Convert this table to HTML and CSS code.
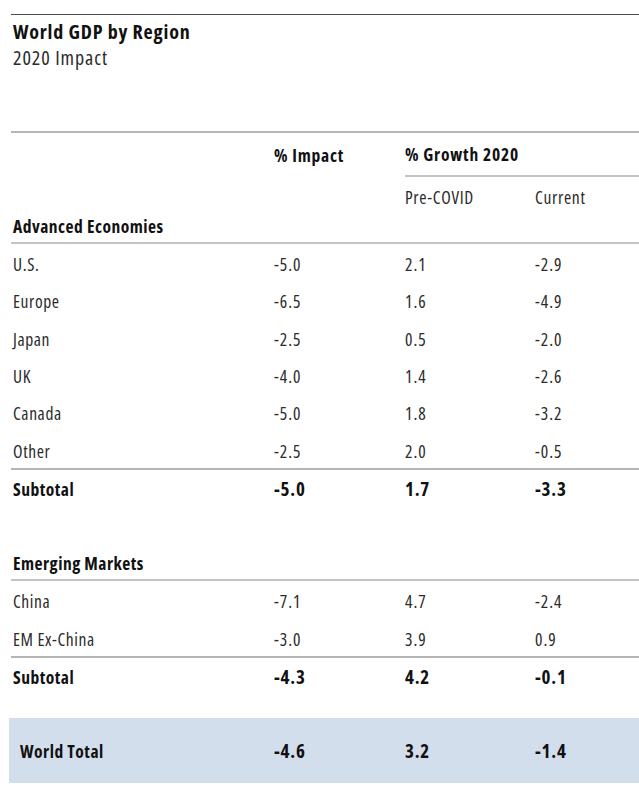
FILE: index.html
```html
<!DOCTYPE html>
<html lang="en">
<head>
<meta charset="utf-8">
<title>World GDP by Region</title>
<link rel="stylesheet" href="styles.css">
</head>
<body>
<div class="figure">
  <header class="fig-head">
    <h1 class="title">World GDP by Region</h1>
    <p class="subtitle">2020 Impact</p>
  </header>
  <div class="table">
    <div class="row head">
      <span></span>
      <span class="hcell">% Impact</span>
      <span class="hcell growth">% Growth 2020</span>
    </div>
    <div class="row subhead">
      <span></span>
      <span></span>
      <span>Pre-COVID</span>
      <span>Current</span>
    </div>
    <div class="group">Advanced Economies</div>
    <div class="row data"><span class="lbl">U.S.</span><span>-5.0</span><span>2.1</span><span>-2.9</span></div>
    <div class="row data"><span class="lbl">Europe</span><span>-6.5</span><span>1.6</span><span>-4.9</span></div>
    <div class="row data"><span class="lbl">Japan</span><span>-2.5</span><span>0.5</span><span>-2.0</span></div>
    <div class="row data"><span class="lbl">UK</span><span>-4.0</span><span>1.4</span><span>-2.6</span></div>
    <div class="row data"><span class="lbl">Canada</span><span>-5.0</span><span>1.8</span><span>-3.2</span></div>
    <div class="row data last"><span class="lbl">Other</span><span>-2.5</span><span>2.0</span><span>-0.5</span></div>
    <div class="row total"><span class="lbl">Subtotal</span><span>-5.0</span><span>1.7</span><span>-3.3</span></div>

    <div class="group spaced">Emerging Markets</div>
    <div class="row data"><span class="lbl">China</span><span>-7.1</span><span>4.7</span><span>-2.4</span></div>
    <div class="row data last"><span class="lbl">EM Ex-China</span><span>-3.0</span><span>3.9</span><span>0.9</span></div>
    <div class="row total"><span class="lbl">Subtotal</span><span>-4.3</span><span>4.2</span><span>-0.1</span></div>

    <div class="row world"><span class="lbl">World Total</span><span>-4.6</span><span>3.2</span><span>-1.4</span></div>
  </div>
</div>
</body>
</html>
```

FILE: styles.css
```css
* { box-sizing: border-box; }

html, body {
  margin: 0;
  padding: 0;
  background: #ffffff;
}

body {
  font-family: "Open Sans", "Noto Sans", sans-serif;
  font-stretch: 75%;
  color: #2b2b2b;
  width: 639px;
}

.figure {
  margin: 14px 0 0 11px;
}

.fig-head {
  border-top: 1px solid #4d4d4d;
  padding: 5px 0 60px 2px;
}

.title {
  margin: 0;
  font-size: 20px;
  line-height: 24px;
  font-weight: 700;
  color: #111;
  letter-spacing: 0.8px;
}

.subtitle {
  margin: 0;
  font-size: 20px;
  line-height: 27px;
  font-weight: 400;
  color: #2b2b2b;
  letter-spacing: 0.9px;
}

.table {
  border-top: 2px solid #b5b5b5;
}

.row {
  display: grid;
  grid-template-columns: 263px 131px 130px 1fr;
  font-size: 17.5px;
  letter-spacing: 1px;
}

.row .lbl {
  padding-left: 2px;
  letter-spacing: 0.6px;
}

.head {
  height: 44px;
  font-weight: 700;
  color: #111;
  letter-spacing: 0.8px;
}

.head .hcell {
  display: flex;
  align-items: center;
}

.head .growth {
  grid-column: 3 / 5;
  border-bottom: 2px solid #c4c4c4;
}

.subhead {
  height: 39px;
  align-items: center;
  line-height: 20px;
  letter-spacing: 0.7px;
}

.group {
  font-size: 17.5px;
  font-weight: 700;
  color: #111;
  line-height: 20px;
  padding: 0 0 6px 2px;
  border-bottom: 2px solid #c4c4c4;
  letter-spacing: 0.5px;
}

.group.spaced {
  margin-top: 47px;
}

.data {
  line-height: 34.33px;
  padding-top: 3px;
}

.data.last {
  border-bottom: 2px solid #b5b5b5;
}

.total {
  padding-top: 2px;
  line-height: 34.33px;
  font-weight: 700;
  color: #111;
  font-size: 19px;
  letter-spacing: 0.8px;
}

.total .lbl {
  font-size: 17.5px;
  letter-spacing: 0.5px;
}

.world {
  margin: 24px 0 0 -2px;
  height: 65px;
  align-items: center;
  grid-template-columns: 265px 131px 130px 1fr;
  background: #d3deed;
  font-weight: 700;
  color: #111;
  font-size: 19px;
  letter-spacing: 0.8px;
}

.world .lbl {
  padding-left: 11px;
  font-size: 17.5px;
  letter-spacing: 0.5px;
}
```
